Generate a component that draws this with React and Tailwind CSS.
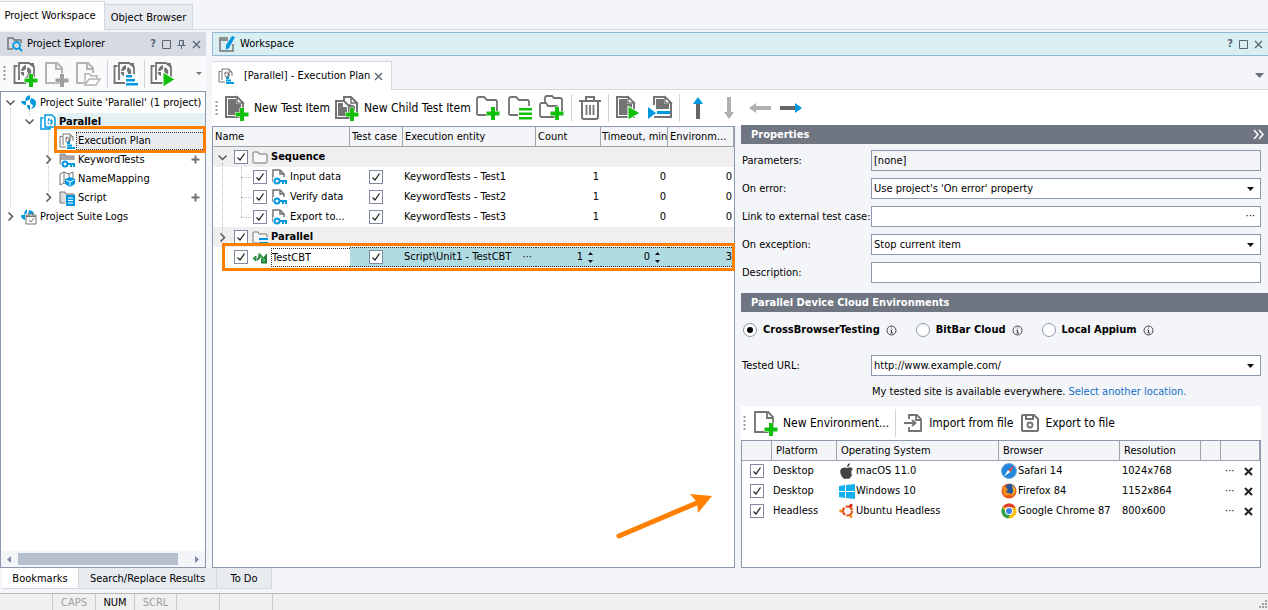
const treeItems = [
  { label: "Project Suite 'Parallel' (1 project)", depth: 0, arrow: 'down', icon: 'suite' },
  { label: 'Parallel', depth: 1, arrow: 'down', icon: 'project', active: true },
  { label: 'Execution Plan', depth: 2, icon: 'plan', selected: true },
  { label: 'KeywordTests', depth: 2, arrow: 'right', icon: 'keyword', add: true },
  { label: 'NameMapping', depth: 2, icon: 'mapping' },
  { label: 'Script', depth: 2, arrow: 'right', icon: 'script', add: true },
  { label: 'Project Suite Logs', depth: 0, arrow: 'right', icon: 'logs' },
];

const tests = [
  { name: 'Input data', entity: 'KeywordTests - Test1' },
  { name: 'Verify data', entity: 'KeywordTests - Test2' },
  { name: 'Export to...', entity: 'KeywordTests - Test3' },
];

const environments = [
  { platform: 'Desktop', os: 'macOS 11.0', osIcon: 'apple', browser: 'Safari 14', browserIcon: 'safari', resolution: '1024x768' },
  { platform: 'Desktop', os: 'Windows 10', osIcon: 'windows', browser: 'Firefox 84', browserIcon: 'firefox', resolution: '1152x864' },
  { platform: 'Headless', os: 'Ubuntu Headless', osIcon: 'ubuntu', browser: 'Google Chrome 87', browserIcon: 'chrome', resolution: '800x600' },
];

const GRAY = '#737373';
const BLUE = '#0099e0';
const GREEN = '#12bf0b';

/* ---------- icon parts ---------- */

const Svg = ({ size = 26, w, h, children }) => (
  <svg width={w || size} height={h || size} viewBox={`0 0 ${w || size} ${h || size}`} fill="none" className="shrink-0" aria-hidden="true">
    {children}
  </svg>
);

const PlusMark = ({ x = 14, y = 13, color = GREEN }) => (
  <path d={`M${x + 4} ${y}h4v4.5h4.5v4h-4.5v4.5h-4v-4.5h-4.5v-4h4.5z`} fill={color} stroke="#fff" strokeWidth="1" paintOrder="stroke" />
);

// project sheets with the round product mark
const ProjectSheets = () => (
  <>
    <path d="M4.5 5H1.5v17H13" stroke={GRAY} strokeWidth="1.8" />
    <path d="M6 19V2h10l5 4v10" stroke={GRAY} strokeWidth="1.8" />
    <path d="M16 2h5v5z" fill={GRAY} />
    <path d="M13 4v4l-3 2H8q1-5 5-6zM7.5 11H11v4q-3-1-3.500-4zM15 6q5 3 2.500 8-2 3-5.500 3 3-2 3-5-2-3 0-6z" fill={GRAY} />
  </>
);

const AddProjectIcon = () => <Svg><ProjectSheets /><PlusMark x={12} /></Svg>;
const PlanIcon = () => (
  <Svg>
    <ProjectSheets />
    <path d="M12 13h13v12H12z" fill="#fff" />
    <path d="M13 14h6v2.500h-6zM13 18h9v2.500h-9zM13 22h12v2.500H13z" fill={BLUE} />
  </Svg>
);
const RunProjectIcon = () => <Svg><ProjectSheets /><path d="M13 11v15l12-7.500z" fill={GREEN} stroke="#fff" /></Svg>;

const AddItemIcon = () => (
  <Svg>
    <path d="M2 2h11l5 5v15H2z" stroke="#b4b4b4" strokeWidth="2" />
    <path d="M12 2v6h6" stroke="#b4b4b4" strokeWidth="2" />
    <PlusMark x={12} color="#a0a0a0" />
  </Svg>
);
const OpenItemIcon = () => (
  <Svg>
    <path d="M9 22H2V2h11l5 5v5" stroke="#b4b4b4" strokeWidth="2" />
    <path d="M12 2v6h6" stroke="#b4b4b4" strokeWidth="2" />
    <path d="M10 24V13h5l1 2h6v3M10 24l4-6h11l-4 6z" fill="#fff" stroke="#b4b4b4" strokeWidth="1.5" />
  </Svg>
);

const DarkSheet = ({ x = 0, y = 0 }) => (
  <g transform={`translate(${x} ${y})`}>
    <path d="M2 2h11l6 6v14H2z" fill="#fff" stroke={GRAY} strokeWidth="2" />
    <path d="M4 4h8v5h5v11H4z" fill={GRAY} />
    <path d="M13 2v6h6z" fill="#fff" stroke={GRAY} strokeWidth="1.5" />
  </g>
);
const NewTestIcon = () => <Svg><DarkSheet /><PlusMark x={12} /></Svg>;
const NewChildIcon = () => (
  <Svg>
    <path d="M10 7V2h7l6 6v11" stroke={GRAY} strokeWidth="2" />
    <path d="M17 2v6h6" stroke={GRAY} strokeWidth="1.5" />
    <path d="M2 6h8l5 5v12H2z" fill="#fff" stroke={GRAY} strokeWidth="2" />
    <path d="M4 8h5v4h4v9H4z" fill={GRAY} />
    <path d="M15 9l6 2v5h-6z" fill={GRAY} />
    <PlusMark x={12} />
  </Svg>
);
const FolderShape = ({ d = 'M2 19V4q0-2 2-2h5l3 3h8q2 0 2 2v13H4q-2 0-2-1z' }) => (
  <path d={d} fill="#fff" stroke={GRAY} strokeWidth="1.8" />
);
const NewFolderIcon = () => <Svg><FolderShape /><PlusMark x={12} y={12} /></Svg>;
const NewParallelIcon = () => (
  <Svg>
    <FolderShape />
    <path d="M11 11h15v14H11z" fill="#fff" />
    <path d="M12 13h13v2.500H12zM12 17.500h13V20H12zM12 22h13v2.500H12z" fill={GREEN} />
  </Svg>
);
const NewChildFolderIcon = () => (
  <Svg>
    <FolderShape d="M6 9V3q0-2 2-2h5l2 2h6q2 0 2 2v12H6z" />
    <FolderShape d="M1 20V10q0-2 2-2h4l2 3h8q2 0 2 2v8q0 1-1 1H3q-2 0-2-2z" />
    <PlusMark x={12} y={12} />
  </Svg>
);
const TrashIcon = () => (
  <Svg w={24} h={26}>
    <path d="M8 5V2h8v3M1 6h22M4 7v15q0 2 2 2h12q2 0 2-2V7" stroke={GRAY} strokeWidth="2" />
    <path d="M8.500 10v10M12 10v10M15.500 10v10" stroke={GRAY} strokeWidth="1.800" />
  </Svg>
);
const RunItemIcon = () => <Svg><DarkSheet /><path d="M13 11v14l12-7z" fill={GREEN} stroke="#fff" /></Svg>;
const RunFromIcon = () => (
  <Svg>
    <DarkSheet x={5} />
    <path d="M0 10h9v15H0zM8 14h15v9H8z" fill="#fff" />
    <path d="M1 12v12l8-6z" fill={BLUE} />
    <path d="M10 16h13v3H10z" fill={BLUE} />
    <path d="M7 22h17V8" stroke={GRAY} strokeWidth="2" />
  </Svg>
);

const arrowStyles = {
  up: { color: '#666', tip: BLUE, turn: 0 },
  down: { color: '#b0b0b0', tip: '#b0b0b0', turn: 180 },
  left: { color: '#b0b0b0', tip: '#b0b0b0', turn: 270 },
  right: { color: '#666', tip: BLUE, turn: 90 },
};
const ArrowIcon = ({ dir }) => {
  const { color, tip, turn } = arrowStyles[dir];
  return (
    <Svg size={24}>
      <g transform={`rotate(${turn} 12 12)`}>
        <path d="M12 7v16" stroke={color} strokeWidth="4" />
        <path d="M12 1l5 7H7z" fill={tip} />
      </g>
    </Svg>
  );
};

const NewEnvIcon = () => (
  <Svg>
    <path d="M2 2h13l5 5v15H2z" stroke={GRAY} strokeWidth="1.800" />
    <path d="M14 2v6h6" stroke={GRAY} strokeWidth="1.800" />
    <PlusMark x={12} />
  </Svg>
);
const ImportIcon = () => (
  <Svg size={20}>
    <path d="M6 6V2h8l4 4v12H6v-4M13 2v5h5" stroke={GRAY} strokeWidth="1.800" />
    <path d="M1 10h11M9 7l3.500 3L9 13" stroke={GRAY} strokeWidth="1.800" />
  </Svg>
);
const SaveIcon = () => (
  <Svg size={20}>
    <path d="M3 2h11l4 4v11q0 1-1 1H3q-1 0-1-1V3q0-1 1-1z" stroke={GRAY} strokeWidth="2" />
    <path d="M6 2v4h7V2" stroke={GRAY} strokeWidth="2" />
    <circle cx="10" cy="12" r="2.500" stroke={GRAY} strokeWidth="1.800" />
  </Svg>
);

const KeyMark = ({ x = 0, y = 0 }) => (
  <g transform={`translate(${x} ${y})`}>
    <path d="M0 0h14v8H0z" fill="#fff" />
    <circle cx="4" cy="4" r="2.500" stroke={BLUE} strokeWidth="2" />
    <path d="M6 4h8M10 4v3M13 4v3" stroke={BLUE} strokeWidth="2" />
  </g>
);

const smallIcons = {
  suite: (
    <path d="M4 5q1-4 5-5v4L6 6zM0 6h5v4Q1 10 0 6zM10 3q5 1 5 5 0 5-5 6 2-2 2-4-3-1-3-4zM6 10h3v5q-3-1-3-5z" fill={BLUE} />
  ),
  project: (
    <>
      <path d="M3.500 4H1v11h9v-2M5 12V1h7l3 3v9H5z" stroke={BLUE} strokeWidth="1.500" />
      <path d="M9.500 3.500v3l-2 1q0-3 2-4zM7 8.500h2v2zM11 5q3 2 1 5l-3 1.500q3-3 1-5z" fill={BLUE} />
    </>
  ),
  plan: (
    <>
      <path d="M3 3.500H1V14h6M4 12V1h7l3 3v4M11 1v3h3" stroke={GRAY} />
      <path d="M8.500 3v2.500L6 7q0-3 2.500-4zM6 7.500h2v2zM10 4q3 2 1 5H8q3-2 1-4z" fill={GRAY} />
      <path d="M8 9h3v2H8zM8 11.500h5v2H8zM8 14h8v2H8z" fill={BLUE} />
    </>
  ),
  keyword: (
    <>
      <path d="M1 12V2h5l1 2h8v8z" fill="#a8a8a8" stroke="#8c8c8c" />
      <KeyMark x={2} y={8} />
    </>
  ),
  mapping: (
    <>
      <path d="M1 3l4-2 5 2 4-2v7M1 3v11l4-2V1M5 12l3 1M10 3v4" stroke={GRAY} />
      <path d="M11 6l5 2v5l-5 3-5-3V8z" fill={BLUE} />
      <path d="M7 9l4 2 4-2M11 11v4" stroke="#fff" />
    </>
  ),
  script: (
    <>
      <path d="M6 13H1V2h5l1 2h8v2" fill="#ddd" stroke={GRAY} />
      <path d="M7 5h9v11H7z" fill={BLUE} />
      <path d="M9 8h5M9 10.500h5M9 13h5" stroke="#fff" />
    </>
  ),
  logs: (
    <>
      <path d="M6 0v4L3 6q0-4 3-6zM0 6h4v5q-4-1-4-5zM8 1q5 1 5 4H7z" fill={BLUE} />
      <path d="M5 6h10v9H5z" fill="#fff" stroke={GRAY} />
      <path d="M5 7.500h10M8 4v3M12 4v3M8 11l2 2 3-4" stroke={GRAY} />
    </>
  ),
  folder: <path d="M1 13V4q0-1 1-1h4l1 2h7q1 0 1 1v7q0 1-1 1H2q-1 0-1-1z" fill="#f8f8f8" stroke={GRAY} />,
  parallel: (
    <>
      <path d="M1 13V4q0-1 1-1h4l1 2h7q1 0 1 1v8H2q-1 0-1-1z" fill="#f8f8f8" stroke={GRAY} />
      <path d="M6 8h10v8H6z" fill="#efefef" />
      <path d="M7 9h9v2H7zM7 13h9v2H7z" fill={BLUE} />
    </>
  ),
  test: (
    <>
      <path d="M2 13V1h7l4 4v5M9 1v4h4" stroke={GRAY} strokeWidth="1.500" />
      <KeyMark x={2} y={8} />
    </>
  ),
  routine: (
    <>
      <path d="M1 9.500L4 7v5z" fill="#3fae5a" stroke="#1c7d36" />
      <path d="M5 10.500q2.500 0 2.500-6M7 5l3 3v3.500l4-4.500v6.500H9.500" stroke="#1c7d36" strokeWidth="2" />
      <path d="M8 6.500l5 6" stroke="#3fae5a" strokeWidth="2" />
    </>
  ),
  apple: (
    <path d="M11 0q0 3-3 4 0-3 3-4zM8 5q4-2 6 1-3 2-1 6-2 4-4 4-1-1-3 0-2 0-4-4-2-5 1-7 3-1 5 0z" fill="#444" />
  ),
  windows: <path d="M0 3l6-1v6H0zM7 2l9-1v7H7zM0 9h6v6l-6-1zM7 9h9v7l-9-1z" fill="#14b0f0" />,
  ubuntu: (
    <>
      <circle cx="8.500" cy="8" r="4.500" stroke="#e2501a" strokeWidth="2.200" strokeDasharray="8 1.400" />
      <circle cx="1.800" cy="8" r="1.600" fill="#f08a1c" />
      <circle cx="12" cy="2.400" r="1.600" fill="#d02810" />
      <circle cx="12" cy="13.600" r="1.600" fill="#f0a020" />
    </>
  ),
  safari: (
    <>
      <circle cx="8" cy="8" r="7.500" fill="#2487dd" stroke="#69a9e0" />
      <path d="M13 2.500L9.300 9 7 7z" fill="#f04a38" />
      <path d="M3 13.500L7 7l2.300 2z" fill="#fff" />
    </>
  ),
  firefox: (
    <>
      <circle cx="8" cy="8" r="7.500" fill="#e8581a" />
      <circle cx="9" cy="6" r="5" fill="#21579f" />
      <path d="M11 2q4 3 3 7-2 4-5 4 4-3 3-6z" fill="#f9b91c" />
      <path d="M1 3q2 1 4 1l2 3-2 1q1 3 5 2-2 4-7 2z" fill="#f68a1e" />
    </>
  ),
  chrome: (
    <>
      <circle cx="8" cy="8" r="7.500" fill="#fbc116" />
      <path d="M1.500 4.200A7.500 7.500 0 0 1 14.600 4.500H8z" fill="#e33b2e" />
      <path d="M1.500 4.200A7.500 7.500 0 0 0 7.200 15.500L10 10 5 9z" fill="#2ea04f" />
      <circle cx="8" cy="8" r="4" fill="#fff" />
      <circle cx="8" cy="8" r="3" fill="#3f80ea" />
    </>
  ),
};
const SmallIcon = ({ name }) => <Svg size={16}>{smallIcons[name]}</Svg>;

const Chevron = ({ dir }) => (
  <Svg size={9}>
    <path d={dir === 'down' ? 'M.5 2.500l4 4 4-4' : 'M2.500.5l4 4-4 4'} stroke="#555" strokeWidth="1.500" />
  </Svg>
);

const Close = () => <Svg size={9}><path d="M1 1l7 7M8 1L1 8" stroke="#5b6472" strokeWidth="1.300" /></Svg>;

const WindowButtons = ({ pin }) => (
  <div className="flex items-center gap-1.5 text-[#5b6472]">
    <button className="font-bold" aria-label="Help">?</button>
    <button aria-label="Maximize"><Svg size={9}><path d="M.5.5h8v8h-8z" stroke="#5b6472" /></Svg></button>
    {pin && <button aria-label="Pin"><Svg size={9}><path d="M2.500 5V.5h4V5M6 .5V5M.5 5.500h8M4.500 6v3" stroke="#5b6472" /></Svg></button>}
    <button aria-label="Close"><Close /></button>
  </div>
);

/* ---------- controls ---------- */

const Grip = () => (
  <Svg w={3} h={15}><path d="M1.500 0v15" stroke="#9a9a9a" strokeWidth="2" strokeDasharray="2 2" /></Svg>
);

const Separator = () => <span className="h-7 w-px shrink-0 bg-[#d0d3d8]" />;

const CheckBox = ({ label, checked = true }) => (
  <span className="inline-grid size-3.5 shrink-0 align-middle">
    <input
      type="checkbox"
      defaultChecked={checked}
      aria-label={label}
      className="peer col-start-1 row-start-1 size-3.5 appearance-none border border-[#7f8aa0] bg-white"
    />
    <svg viewBox="0 0 14 14" fill="none" className="pointer-events-none invisible col-start-1 row-start-1 size-3.5 peer-checked:visible">
      <path d="M3.500 7.500l2.500 2.500 4.500-6.500" stroke="#222" strokeWidth="1.300" />
    </svg>
  </span>
);

const Tool = ({ label, text, children }) => (
  <button aria-label={label} className="flex shrink-0 items-center gap-1 whitespace-nowrap text-xs">
    {children}
    {text}
  </button>
);

const Field = ({ id, label, children }) => (
  <div className="flex items-center">
    <label htmlFor={id} className="w-[130px] shrink-0 whitespace-nowrap pl-px">{label}</label>
    <div className="relative flex-1">{children}</div>
  </div>
);

const inputClass = 'block h-[21px] w-full border border-[#8b98ae] px-0.5';

const SelectBox = ({ id, value }) => (
  <>
    <select id={id} defaultValue={value} className={`${inputClass} appearance-none bg-white`}>
      <option>{value}</option>
    </select>
    <svg width="7" height="4" className="pointer-events-none absolute right-[7px] top-[9px]"><path d="M0 0h7L3.500 4z" fill="#111" /></svg>
  </>
);

const CloudOption = ({ label, checked }) => (
  <div className="flex items-center gap-1.5">
    <label className="flex items-center gap-1.5 font-bold">
      <span className="inline-grid size-3.5 place-items-center">
        <input
          type="radio"
          name="cloud"
          defaultChecked={checked}
          className="peer col-start-1 row-start-1 size-3.5 appearance-none rounded-full border border-[#8b98ae] bg-white"
        />
        <span className="pointer-events-none invisible col-start-1 row-start-1 size-1.5 rounded-full bg-black peer-checked:visible" />
      </span>
      {label}
    </label>
    <Svg size={11}>
      <circle cx="5.500" cy="5.500" r="4.500" stroke="#444" />
      <path d="M4.500 5h1v3M4.500 8h2.500M5.500 2.500v1" stroke="#444" />
    </Svg>
  </div>
);

/* ---------- left side ---------- */

const indents = ['pl-0', 'pl-[19px]', 'pl-[38px]'];

const TreeRow = ({ item }) => {
  let labelClass = 'px-0.5';
  if (item.active) labelClass = 'flex-1 bg-[#e4f2f6] px-0.5 font-bold';
  if (item.selected) labelClass = 'flex-1 border border-dotted border-[#333] bg-[#e8ebf0] px-px';
  return (
    <li className={`flex h-[19px] items-center ${indents[item.depth]}`}>
      <span className="flex w-[18px] shrink-0 justify-center">{item.arrow && <Chevron dir={item.arrow} />}</span>
      <span className="flex w-[19px] shrink-0 justify-center">
        <SmallIcon name={item.icon} />
      </span>
      <span className={`flex h-[18px] items-center whitespace-nowrap ${labelClass}`}>{item.label}</span>
      {item.add && (
        <button aria-label={`Add to ${item.label}`} className="ml-auto mr-[5px]">
          <Svg size={9}><path d="M4.500.5v8M.5 4.500h8" stroke={GRAY} strokeWidth="2" /></Svg>
        </button>
      )}
    </li>
  );
};

const ProjectExplorer = () => (
  <aside className="flex w-[206px] shrink-0 flex-col">
    <div className="flex h-6 items-center gap-1 bg-[#d5dae3] pl-[7px] pr-[5px]">
      <Svg size={16}>
        <path d="M6 13H1V2h5l1 2h7v3" stroke={GRAY} strokeWidth="1.500" />
        <circle cx="9.500" cy="9.500" r="3.500" stroke={BLUE} strokeWidth="1.800" />
        <path d="M12 12l3 3" stroke={BLUE} strokeWidth="2" />
      </Svg>
      <h2 className="flex-1 whitespace-nowrap">Project Explorer</h2>
      <WindowButtons pin />
    </div>
    <div className="flex h-[35px] items-center bg-[#f9fafb] pl-[3px] pr-1">
      <Grip />
      <div className="ml-[7px] flex items-center gap-[5px]">
        <Tool label="Add item to suite"><AddProjectIcon /></Tool>
        <Tool label="New item"><AddItemIcon /></Tool>
        <Tool label="Open item"><OpenItemIcon /></Tool>
      </div>
      <div className="ml-1.5 flex items-center gap-[5px]">
        <Separator />
        <Tool label="Execution plan"><PlanIcon /></Tool>
        <Separator />
        <Tool label="Run project"><RunProjectIcon /></Tool>
      </div>
      <button aria-label="More" className="ml-auto"><svg width="6" height="3"><path d="M0 0h6L3 3z" fill="#777" /></svg></button>
    </div>
    <div className="relative flex flex-1 flex-col border border-[#8b98ae] bg-white">
      {/* tree guide lines */}
      <span className="absolute left-[9px] top-4 h-[100px] border-l border-dotted border-[#c4c4c4]" />
      <span className="absolute left-7 top-4 h-2 border-l border-dotted border-[#c4c4c4]" />
      <span className="absolute left-[47px] top-9 h-[68px] border-l border-dotted border-[#c4c4c4]" />
      <ul className="relative pt-px">
        {treeItems.map((item) => <TreeRow key={item.label} item={item} />)}
      </ul>
      <span className="pointer-events-none absolute -right-px left-[53px] top-[34px] h-[27px] border-[3px] border-[#ff8000]" />
      <div className="mt-auto flex h-4 items-center bg-[#f4f5f8] px-1.5">
        <button aria-label="Scroll left"><svg width="4" height="7" className="block"><path d="M4 0v7L0 3.500z" fill="#7f8ca5" /></svg></button>
        <div className="mx-[7px] flex-1"><div className="h-3 w-[94%] bg-[#b6bfce]" /></div>
        <button aria-label="Scroll right"><svg width="4" height="7" className="block"><path d="M0 0v7l4-3.500z" fill="#7f8ca5" /></svg></button>
      </div>
    </div>
  </aside>
);

/* ---------- test items grid ---------- */

const headCell = 'h-5 overflow-hidden whitespace-nowrap border-b border-r border-[#a0a3a8] bg-[#f4f5f8] text-left font-normal';

const NameCell = ({ arrow, icon, label, depth = 0, bold, children }) => (
  <div className={`flex h-5 items-center ${indents[depth]}`}>
    <span className="mr-[3px] flex w-[18px] shrink-0 justify-center">{arrow && <Chevron dir={arrow} />}</span>
    <CheckBox label={`Enable ${label}`} />
    <span className="ml-1 flex shrink-0"><SmallIcon name={icon} /></span>
    <span className={`ml-[3px] flex-1 truncate ${bold ? 'font-bold' : ''}`}>{children || label}</span>
  </div>
);

const Spinner = ({ label, value }) => (
  <div className="flex items-center justify-end gap-1 pr-[7px]">
    {value}
    <button aria-label={`Change ${label}`}>
      <svg width="7" height="11" className="block"><path d="M1 3L3.500 0 6 3zM1 8L3.500 11 6 8z" fill="#111" /></svg>
    </button>
  </div>
);

const GroupRow = ({ arrow, icon, label }) => (
  <tr className="bg-[#efefef]">
    <td className="h-5 p-0" colSpan={6}><NameCell arrow={arrow} icon={icon} label={label} bold /></td>
  </tr>
);

const TestGrid = () => (
  <section className="relative flex-1 border border-[#8b98ae] bg-white">
    <table className="w-full table-fixed border-separate border-spacing-0">
      <colgroup>
        <col className="w-[137px]" />
        <col className="w-[53px]" />
        <col className="w-[133px]" />
        <col className="w-[65px]" />
        <col className="w-[67px]" />
        <col />
      </colgroup>
      <thead>
        <tr>
          <th className={`${headCell} pl-0.5`}>Name</th>
          <th className={`${headCell} pl-0.5`}>Test case</th>
          <th className={`${headCell} pl-0.5`}>Execution entity</th>
          <th className={`${headCell} pl-0.5`}>Count</th>
          <th className={`${headCell} p-0 pl-px`}>Timeout, min</th>
          <th className={`${headCell} pl-0.5`}>Environm...</th>
        </tr>
      </thead>
      <tbody>
        <GroupRow arrow="down" icon="folder" label="Sequence" />
        {tests.map((t) => (
          <tr key={t.name}>
            <td className="h-5 p-0"><NameCell icon="test" label={t.name} depth={1} /></td>
            <td className="p-0 pr-0.5 text-center leading-none"><CheckBox label={`${t.name} is a test case`} /></td>
            <td className="truncate p-0 pl-px">{t.entity}</td>
            <td className="p-0 pr-0.5 text-right">1</td>
            <td className="p-0 pr-0.5 text-right">0</td>
            <td className="p-0 pr-0.5 text-right">0</td>
          </tr>
        ))}
        <GroupRow arrow="right" icon="parallel" label="Parallel" />
        <tr className="bg-[#b0dbe3]">
          <td className="h-5 bg-white p-0">
            <NameCell icon="routine" label="TestCBT">
              <span className="block border border-r-0 border-dotted border-[#333] leading-[17px]">TestCBT</span>
            </NameCell>
          </td>
          <td className="border-y border-dotted border-[#333] p-0 pr-0.5 text-center leading-none"><CheckBox label="TestCBT is a test case" /></td>
          <td className="border-y border-dotted border-[#333] p-0 pl-px">
            <div className="flex items-center justify-between pr-1">
              Script\Unit1 - TestCBT
              <button aria-label="Choose entity">···</button>
            </div>
          </td>
          <td className="border-y border-dotted border-[#333] p-0"><Spinner label="count" value="1" /></td>
          <td className="border-y border-dotted border-[#333] p-0"><Spinner label="timeout" value="0" /></td>
          <td className="border-y border-dotted border-[#333] p-0 pr-0.5 text-right">3</td>
        </tr>
      </tbody>
    </table>
    {/* branch lines */}
    <span className="absolute left-[9px] top-9 h-[70px] border-l border-dotted border-[#b8b8b8]" />
    <span className="absolute left-7 top-10 h-[50px] border-l border-dotted border-[#b8b8b8]" />
    {['top-[50px]', 'top-[70px]', 'top-[90px]'].map((top) => (
      <span key={top} className={`absolute left-7 w-2.5 border-t border-dotted border-[#b8b8b8] ${top}`} />
    ))}
    <span className="pointer-events-none absolute -right-px left-[9px] top-[116px] h-7 border-[3px] border-[#ff8000]" />
    <svg width="98" height="48" className="pointer-events-none absolute bottom-[26px] right-[21px]" aria-hidden="true">
      <path d="M4 43L84 9" stroke="#ff8000" strokeWidth="5" strokeLinecap="round" />
      <path d="M97 3L75 1l7 8 1 11z" fill="#ff8000" />
    </svg>
  </section>
);

/* ---------- properties ---------- */

const SectionTitle = ({ children, action }) => (
  <div className="flex h-[19px] items-center justify-between bg-[#6f7682] pl-2.5 pr-1 font-bold text-white">
    <h3>{children}</h3>
    {action}
  </div>
);

const EnvironmentTable = () => (
  <div className="flex-1 border border-[#8b98ae] bg-white">
    <table className="w-full table-fixed border-separate border-spacing-0">
      <colgroup>
        <col className="w-[30px]" />
        <col className="w-[65px]" />
        <col className="w-[162px]" />
        <col className="w-[121px]" />
        <col className="w-[81px]" />
        <col className="w-5" />
        <col />
      </colgroup>
      <thead>
        <tr>
          <th className={headCell}></th>
          <th className={`${headCell} pl-1`}>Platform</th>
          <th className={`${headCell} pl-1`}>Operating System</th>
          <th className={`${headCell} pl-1`}>Browser</th>
          <th className={`${headCell} pl-1`}>Resolution</th>
          <th className={headCell}></th>
          <th className={headCell}></th>
        </tr>
      </thead>
      <tbody>
        {environments.map((env) => (
          <tr key={env.os}>
            <td className="h-5 p-0 text-center leading-none"><CheckBox label={`Use ${env.os}`} /></td>
            <td className="p-0 pl-px">{env.platform}</td>
            <td className="p-0 pl-0.5"><div className="flex items-center gap-px"><SmallIcon name={env.osIcon} />{env.os}</div></td>
            <td className="p-0 pl-0.5"><div className="flex items-center gap-px whitespace-nowrap"><SmallIcon name={env.browserIcon} />{env.browser}</div></td>
            <td className="p-0 pl-0.5">{env.resolution}</td>
            <td className="p-0"></td>
            <td className="p-0">
              <div className="flex items-center justify-between pl-1 pr-[7px]">
                <button aria-label={`Edit ${env.os}`}>···</button>
                <button aria-label={`Remove ${env.os}`}><Svg size={9}><path d="M1 1l7 7M8 1L1 8" stroke="#222" strokeWidth="2" /></Svg></button>
              </div>
            </td>
          </tr>
        ))}
      </tbody>
    </table>
  </div>
);

const Properties = () => (
  <section className="flex w-[527px] shrink-0 flex-col">
    <div className="-mt-px">
      <SectionTitle
        action={<button aria-label="Collapse"><Svg size={11}><path d="M1 1l4 4.500L1 10M6 1l4 4.500L6 10" stroke="#fff" strokeWidth="1.500" /></Svg></button>}
      >
        Properties
      </SectionTitle>
    </div>
    <div className="flex flex-col gap-[7px] py-1.5 pr-[7px]">
      <Field id="parameters" label="Parameters:">
        <input id="parameters" defaultValue="[none]" className={`${inputClass} bg-[#f4f5f8]`} readOnly />
      </Field>
      <Field id="on-error" label="On error:"><SelectBox id="on-error" value="Use project's 'On error' property" /></Field>
      <Field id="link" label="Link to external test case:">
        <input id="link" className={`${inputClass} bg-white`} />
        <button aria-label="Browse" className="absolute right-1.5 top-0.5">···</button>
      </Field>
      <Field id="on-exception" label="On exception:"><SelectBox id="on-exception" value="Stop current item" /></Field>
      <Field id="description" label="Description:"><input id="description" className={`${inputClass} bg-white`} /></Field>
    </div>
    <div className="mt-1"><SectionTitle>Parallel Device Cloud Environments</SectionTitle></div>
    <div className="flex h-9 items-center gap-[19px] pl-0.5">
      <CloudOption label="CrossBrowserTesting" checked />
      <CloudOption label="BitBar Cloud" />
      <CloudOption label="Local Appium" />
    </div>
    <div className="flex flex-1 flex-col pr-[7px]">
      <div className="mt-[7px]"><Field id="url" label="Tested URL:"><SelectBox id="url" value="http://www.example.com/" /></Field></div>
      <p className="mb-1.5 mt-2 flex gap-[3px] whitespace-nowrap pl-[131px]">
        My tested site is available everywhere.
        <a href="#location" className="text-[#1270c8]">Select another location.</a>
      </p>
      <div className="flex h-[34px] items-center bg-white pl-0.5">
        <Grip />
        <span className="ml-[7px] mr-1.5 flex"><Tool text="New Environment..."><NewEnvIcon /></Tool></span>
        <Separator />
        <span className="mx-[7px] flex"><Tool text={<span className="pl-0.5">Import from file</span>}><ImportIcon /></Tool></span>
        <Tool text={<span className="pl-px">Export to file</span>}><SaveIcon /></Tool>
      </div>
      <EnvironmentTable />
    </div>
  </section>
);

/* ---------- workspace ---------- */

const Workspace = () => (
  <main className="flex min-w-0 flex-1 flex-col">
    <div className="flex h-6 items-center gap-[5px] border border-r-0 border-[#8fb9d6] bg-[#d8eef1] pl-1.5 pr-[5px]">
      <Svg size={16}>
        <path d="M9 2H1v13h13V8M1 4h8" stroke={GRAY} strokeWidth="1.500" />
        <path d="M13 0l3 1-6 11-3 2V9z" fill={BLUE} />
      </Svg>
      <h2 className="flex-1">Workspace</h2>
      <WindowButtons />
    </div>
    <div className="mt-[5px] flex h-[29px]">
      <div className="flex w-[180px] shrink-0 items-center border border-b-0 border-l-0 border-[#d3d8e0] bg-white pl-1.5">
        <SmallIcon name="plan" />
        <span className="ml-2.5 whitespace-nowrap">[Parallel] - Execution Plan</span>
        <button aria-label="Close tab" className="ml-1"><Close /></button>
      </div>
      <div className="flex flex-1 items-center justify-end border-b border-[#d3d8e0] pr-1">
        <button aria-label="Tab list"><svg width="9" height="5"><path d="M0 0h9L4.500 5z" fill="#666e7a" /></svg></button>
      </div>
    </div>
    <div className="flex h-9 items-center bg-white pl-[3px]">
      <Grip />
      <div className="ml-1.5 flex items-center gap-1.5">
        <div className="flex items-center gap-1">
          <Tool text="New Test Item"><NewTestIcon /></Tool>
          <Tool text="New Child Test Item"><NewChildIcon /></Tool>
          <Tool label="New folder"><NewFolderIcon /></Tool>
        </div>
        <div className="flex items-center gap-1.5">
          <Tool label="New parallel group"><NewParallelIcon /></Tool>
          <Tool label="New child folder"><NewChildFolderIcon /></Tool>
        </div>
        <Separator />
        <Tool label="Delete"><TrashIcon /></Tool>
        <Separator />
        <Tool label="Run selected"><RunItemIcon /></Tool>
        <Tool label="Run from here"><RunFromIcon /></Tool>
        <Separator />
        <div className="flex items-center gap-[7px]">
          <Tool label="Move up"><ArrowIcon dir="up" /></Tool>
          <Tool label="Move down"><ArrowIcon dir="down" /></Tool>
          <Tool label="Outdent"><ArrowIcon dir="left" /></Tool>
          <Tool label="Indent"><ArrowIcon dir="right" /></Tool>
        </div>
      </div>
    </div>
    <div className="flex flex-1 gap-1.5">
      <TestGrid />
      <Properties />
    </div>
  </main>
);

const App = () => (
  <div className="flex min-h-screen flex-col bg-[#f4f5f8] font-['DejaVu_Sans_Condensed','DejaVu_Sans',sans-serif] text-[11px] leading-4 text-black">
    <nav className="flex h-[30px] items-end">
      <button className="h-[29px] w-[105px] border-r border-t border-[#d3d8e0] bg-white pr-1">Project Workspace</button>
      <button className="h-[26px] w-[88px] border border-l-0 border-[#d3d8e0] bg-[#e8ebf0] pt-0.5">Object Browser</button>
      <span className="flex-1 self-stretch border-b border-[#d3d8e0]" />
    </nav>
    <div className="mt-0.5 flex flex-1 gap-1.5">
      <ProjectExplorer />
      <Workspace />
    </div>
    <div className="flex h-[25px] items-start pl-0.5">
      <button className="h-[21px] w-[76px] border-b border-[#d3d8e0] bg-white pt-0.5">Bookmarks</button>
      <button className="h-[21px] w-[139px] border-b border-x border-[#d3d8e0] bg-[#e8ebf0] pt-0.5">Search/Replace Results</button>
      <button className="h-[21px] w-[55px] border-b border-r border-[#d3d8e0] bg-[#e8ebf0] pt-0.5">To Do</button>
    </div>
    <footer className="flex h-[17px] border-t border-[#b8b8b8] bg-[#f0f0f0] text-[#a0a0a0]">
      <span className="w-[53px] border-r border-[#c8c8c8]" />
      <span className="w-[43px] border-r border-[#c8c8c8] pt-px text-center">CAPS</span>
      <span className="w-[39px] border-r border-[#c8c8c8] pt-px text-center text-black">NUM</span>
      <span className="w-[42px] border-r border-[#c8c8c8] pt-px text-center">SCRL</span>
      <span className="w-[43px] border-r border-[#c8c8c8]" />
      <span className="w-[53px] border-r border-[#c8c8c8]" />
      <span className="ml-auto flex items-end"><Svg size={11}><path d="M9 1v2M6 4v2M9 4v2M3 7v2M6 7v2M9 7v2" stroke="#a0a0a0" strokeWidth="2" /></Svg></span>
    </footer>
  </div>
);

export default App;
